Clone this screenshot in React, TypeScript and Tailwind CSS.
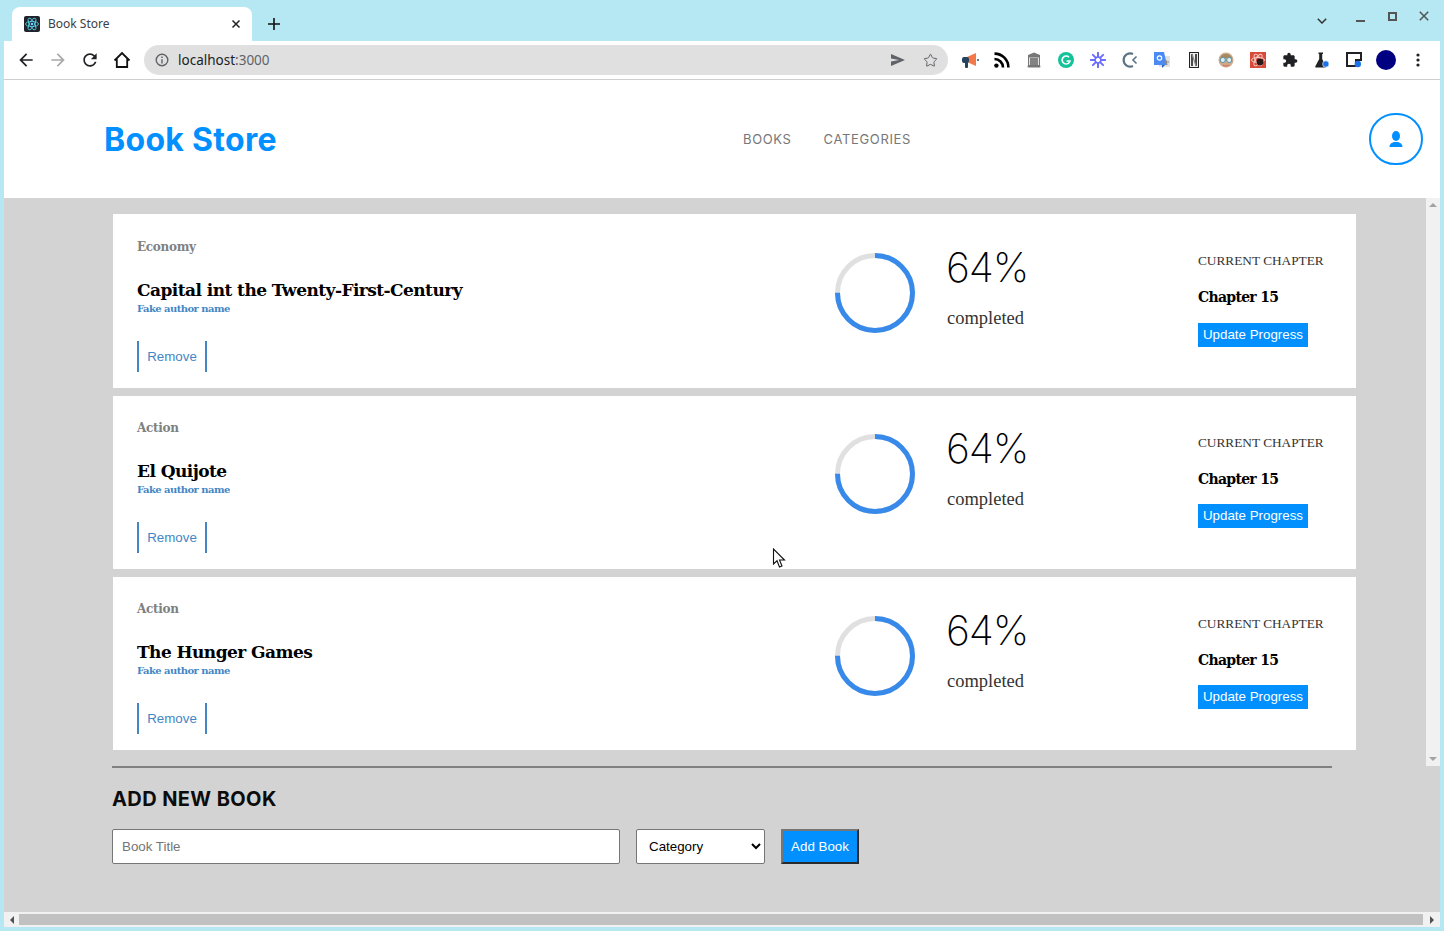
import { Star } from "lucide-react";

const books = [
  { category: "Economy", title: "Capital int the Twenty-First-Century" },
  { category: "Action", title: "El Quijote" },
  { category: "Action", title: "The Hunger Games" },
];

const slab = "font-['DejaVu_Serif','Liberation_Serif',serif]";
const mont = "font-['Inter','Noto_Sans',sans-serif]";
const arial = "font-['Liberation_Sans',Arial,sans-serif]";

function ProgressRing() {
  // 64% is what the reference shows on the label, the ring itself stops at 75%
  const r = 37.5;
  const c = 2 * Math.PI * r;
  return (
    <svg width="80" height="80" viewBox="0 0 80 80" className="shrink-0">
      <circle cx="40" cy="40" r={r} fill="none" stroke="#e0e0e0" strokeWidth="5" />
      <circle
        cx="40"
        cy="40"
        r={r}
        fill="none"
        stroke="#378aea"
        strokeWidth="5"
        strokeDasharray={`${c * 0.75} ${c}`}
        transform="rotate(-90 40 40)"
      />
    </svg>
  );
}

function BookCard({ category, title }: { category: string; title: string }) {
  return (
    <div className="flex h-[173.4px] w-[1243px] shrink-0 bg-white pl-6">
      <div className="w-[698px] shrink-0">
        <div className={`${slab} mt-[24.4px] text-[12px] leading-[16px] font-bold tracking-[-0.3px] text-[#808080]`}>{category}</div>
        <div className={`${slab} mt-[23px] text-[17px] leading-[24px] font-bold tracking-[-0.55px] text-black`}>{title}</div>
        <div className={`${slab} text-[10px] leading-[14px] font-bold tracking-[-0.55px] text-[#4386c5]`}>Fake author name</div>
        <button className={`${arial} mt-[25px] flex h-[31px] w-[70px] items-center justify-center border-x-2 border-[#4386c5] pt-[1px] text-[13.33px] text-[#4386c5]`}>
          Remove
        </button>
      </div>
      <div className="mt-[38.7px]">
        <ProgressRing />
      </div>
      <div className="ml-8 w-[251px] shrink-0">
        <div className={`${mont} mt-[25.7px] -ml-[1px] text-[41px] leading-[54px] font-extralight tracking-[-1.1px] text-black`}>64%</div>
        <div className="mt-[12px] font-['Liberation_Serif',serif] text-[18.5px] leading-[24px] text-[#333]">completed</div>
      </div>
      <div className="flex flex-col items-start">
        <div className="mt-[38.1px] font-['Liberation_Serif',serif] text-[13.3px] leading-[18px] text-[#333]">CURRENT CHAPTER</div>
        <div className={`${slab} mt-[17px] text-[14px] leading-[20px] font-bold tracking-[-0.7px] text-black`}>Chapter 15</div>
        <button className={`${arial} mt-[15.3px] h-[24px] w-[110px] bg-[#0290ff] text-[13.33px] text-white`}>Update Progress</button>
      </div>
    </div>
  );
}

function ExtensionIcons() {
  return (
    <div className="ml-[6px] flex items-center">
      <Slot>
        <svg width="18" height="18" viewBox="0 0 18 18">
          <path d="M6 6 L15 2 V15 L6 11 Z" fill="#f4794a" />
          <rect x="1" y="6" width="7" height="6" rx="2" fill="#23435f" />
          <rect x="4" y="11" width="3" height="6" rx="1" fill="#23435f" />
          <rect x="16" y="8" width="2" height="2" fill="#5c7a90" />
        </svg>
      </Slot>
      <Slot>
        <svg width="16" height="16" viewBox="0 0 16 16" fill="none" stroke="#000" strokeWidth="2.6">
          <circle cx="2.4" cy="13.6" r="2.2" fill="#000" stroke="none" />
          <path d="M0.5 7 A8.5 8.5 0 0 1 9 15.5" />
          <path d="M0.5 1.6 A13.9 13.9 0 0 1 14.4 15.5" />
        </svg>
      </Slot>
      <Slot>
        <svg width="16" height="16" viewBox="0 0 16 16">
          <path d="M8 0.5 L14 3 V5 H2 V3 Z" fill="#777" />
          <rect x="2.5" y="5" width="11" height="8.5" fill="#e4e4e4" stroke="#777" />
          <path d="M5 6v7M7 6v7M9 6v7M11 6v7" stroke="#444" strokeWidth="1.2" />
          <rect x="1.5" y="13.5" width="13" height="2" rx="1" fill="#777" />
        </svg>
      </Slot>
      <Slot>
        <svg width="16" height="16" viewBox="0 0 16 16">
          <circle cx="8" cy="8" r="8" fill="#15c39a" />
          <path d="M11 5.2 A4 4 0 1 0 12 9 H8.6" fill="none" stroke="#fff" strokeWidth="1.6" />
        </svg>
      </Slot>
      <Slot>
        <svg width="16" height="16" viewBox="0 0 16 16" fill="none" stroke="#6d6dff" strokeLinecap="round">
          <path d="M8 0.8V5M8 11V15.2M0.8 8H5M11 8H15.2M2.9 2.9L5.9 5.9M10.1 10.1L13.1 13.1M13.1 2.9L10.1 5.9M5.9 10.1L2.9 13.1" strokeWidth="2" />
          <circle cx="8" cy="8" r="3" strokeWidth="1.4" />
        </svg>
      </Slot>
      <Slot>
        <svg width="16" height="16" viewBox="0 0 16 16" fill="none" stroke="#5b7383" strokeWidth="2.2">
          <path d="M11 2 A6.6 6.6 0 1 0 11 14" />
          <path d="M14.5 4.5 L11 8 L14.5 11.5" strokeWidth="1.6" />
        </svg>
      </Slot>
      <Slot>
        <svg width="16" height="16" viewBox="0 0 16 16">
          <rect x="5" y="4" width="11" height="11" fill="#e2e2e2" />
          <path d="M0 0H10L13 13H0Z" fill="#4a8af4" />
          <circle cx="5.5" cy="6" r="2.2" fill="none" stroke="#fff" strokeWidth="1.2" />
          <path d="M8 16L11 13H8Z" fill="#2a5fb8" />
          <path d="M12 8l1 5M10 10h5" stroke="#888" strokeWidth="1" />
        </svg>
      </Slot>
      <Slot>
        <svg width="10" height="16" viewBox="0 0 10 16">
          <rect x="0.5" y="0.5" width="9" height="15" fill="#eee" stroke="#222" />
          <path d="M3 2V14M7 2V14" stroke="#222" strokeWidth="1.6" />
          <path d="M3 2L7 14" stroke="#888" strokeWidth="1.2" />
        </svg>
      </Slot>
      <Slot>
        <svg width="16" height="16" viewBox="0 0 16 16">
          <circle cx="8" cy="8" r="7.5" fill="#cfa98c" />
          <path d="M2 6A6.5 6.5 0 0 1 14 6Z" fill="#a3895f" />
          <circle cx="4.8" cy="8" r="2.6" fill="#d9eef2" stroke="#5f8ea0" />
          <circle cx="11.2" cy="8" r="2.6" fill="#d9eef2" stroke="#5f8ea0" />
          <path d="M5 13Q8 15 11 13" stroke="#d47a60" strokeWidth="1.5" fill="none" />
        </svg>
      </Slot>
      <Slot>
        <svg width="16" height="16" viewBox="0 0 16 16">
          <rect width="16" height="16" fill="#d94b38" />
          <g fill="none" stroke="#f8d5cf" strokeWidth="0.9">
            <ellipse cx="8" cy="8" rx="6.5" ry="2.6" />
            <ellipse cx="8" cy="8" rx="6.5" ry="2.6" transform="rotate(60 8 8)" />
            <ellipse cx="8" cy="8" rx="6.5" ry="2.6" transform="rotate(120 8 8)" />
          </g>
          <circle cx="10" cy="10" r="3.4" fill="#2b1a18" />
        </svg>
      </Slot>
      <Slot>
        <svg width="16" height="16" viewBox="0 0 24 24" fill="#202124">
          <path d="M20.5 11H19V7c0-1.1-.9-2-2-2h-4V3.5C13 2.12 11.88 1 10.5 1S8 2.12 8 3.5V5H4c-1.1 0-1.99.9-1.99 2v3.8H3.5c1.49 0 2.7 1.21 2.7 2.7s-1.21 2.7-2.7 2.7H2V20c0 1.1.9 2 2 2h3.8v-1.5c0-1.49 1.21-2.7 2.7-2.7 1.49 0 2.7 1.21 2.7 2.7V22H17c1.1 0 2-.9 2-2v-4h1.5c1.38 0 2.5-1.12 2.5-2.5S21.88 11 20.5 11z" />
        </svg>
      </Slot>
      <Slot>
        <svg width="16" height="16" viewBox="0 0 16 16">
          <path d="M4.5 0.5H9V2H8.2V7L12 14.5Q12 15.5 11 15.5H2Q1 15.5 1.2 14.5L5.2 7V2H4.5Z" fill="#202124" />
          <circle cx="11.8" cy="12" r="3.2" fill="#1a73e8" stroke="#fff" strokeWidth="0.6" />
        </svg>
      </Slot>
      <Slot>
        <svg width="16" height="16" viewBox="0 0 16 16">
          <path d="M9 1H15V8H10V14H1V1Z" fill="#fff" stroke="#202124" strokeWidth="2" />
          <circle cx="11.8" cy="12" r="3.2" fill="#1a73e8" />
        </svg>
      </Slot>
      <Slot>
        <div className="size-[20px] rounded-full bg-[#000080]" />
      </Slot>
      <Slot>
        <svg width="4" height="14" viewBox="0 0 4 14" fill="#202124">
          <circle cx="2" cy="2" r="1.6" />
          <circle cx="2" cy="7" r="1.6" />
          <circle cx="2" cy="12" r="1.6" />
        </svg>
      </Slot>
    </div>
  );
}

function Slot({ children }: { children: React.ReactNode }) {
  return <div className="flex h-[30px] w-8 items-center justify-center">{children}</div>;
}

function BrowserChrome() {
  return (
    <>
      {/* tab strip */}
      <div className="flex h-[41px] items-end rounded-t-[5px] bg-[#b6e8f3] pl-3">
        <div className="flex h-[34px] w-[240px] items-center rounded-t-lg bg-white pr-[11px] pl-3 font-['Noto_Sans',sans-serif]">
          <svg width="16" height="16" viewBox="0 0 16 16" className="shrink-0">
            <rect width="16" height="16" rx="2" fill="#20232a" />
            <g fill="none" stroke="#61dafb" strokeWidth="0.8">
              <ellipse cx="8" cy="8" rx="6.5" ry="2.6" />
              <ellipse cx="8" cy="8" rx="6.5" ry="2.6" transform="rotate(60 8 8)" />
              <ellipse cx="8" cy="8" rx="6.5" ry="2.6" transform="rotate(120 8 8)" />
            </g>
            <circle cx="8" cy="8" r="1.3" fill="#61dafb" />
          </svg>
          <span className="ml-2 flex-1 text-[12px] text-[#3c4043]">Book Store</span>
          <svg width="10" height="10" viewBox="0 0 10 10" stroke="#222" strokeWidth="1.5">
            <path d="M1.5 1.5L8.5 8.5M8.5 1.5L1.5 8.5" />
          </svg>
        </div>
        <div className="ml-[16px] flex h-[34px] items-center">
          <svg width="12" height="12" viewBox="0 0 12 12" stroke="#111" strokeWidth="1.6">
            <path d="M6 0V12M0 6H12" />
          </svg>
        </div>
        <div className="ml-auto flex h-[41px] items-center pb-[3px]">
          <svg width="10" height="6" viewBox="0 0 10 6" fill="none" stroke="#333" strokeWidth="1.5" className="mt-[3px]">
            <path d="M0.8 0.8L5 5L9.2 0.8" />
          </svg>
          <div className="ml-[29px] h-[2px] w-[9px] translate-y-[2px] bg-[#555]" />
          <div className="ml-[23px] size-[9px] -translate-y-[3px] border-2 border-[#555]" />
          <svg width="10" height="10" viewBox="0 0 10 10" stroke="#555" strokeWidth="1.6" className="mr-[15px] ml-[22px] -translate-y-[3px]">
            <path d="M0.8 0.8L9.2 9.2M9.2 0.8L0.8 9.2" />
          </svg>
        </div>
      </div>

      {/* toolbar */}
      <div className="mx-[4px] flex h-[39px] items-center border-b border-[#cfcfcf] bg-white pl-[6px]">
        <Slot>
          <svg width="20" height="20" viewBox="0 0 24 24" fill="#202124">
            <path d="M20 11H7.83l5.59-5.59L12 4l-8 8 8 8 1.41-1.41L7.83 13H20v-2z" />
          </svg>
        </Slot>
        <Slot>
          <svg width="20" height="20" viewBox="0 0 24 24" fill="#a8a8a8">
            <path d="M4 11h12.17l-5.59-5.59L12 4l8 8-8 8-1.41-1.41L16.17 13H4v-2z" />
          </svg>
        </Slot>
        <Slot>
          <svg width="20" height="20" viewBox="0 0 24 24" fill="#202124">
            <path d="M17.65 6.35C16.2 4.9 14.21 4 12 4c-4.42 0-7.99 3.58-7.99 8s3.57 8 7.99 8c3.73 0 6.84-2.55 7.73-6h-2.08c-.82 2.33-3.04 4-5.65 4-3.31 0-6-2.69-6-6s2.69-6 6-6c1.66 0 3.14.69 4.22 1.78L13 11h7V4l-2.35 2.35z" />
          </svg>
        </Slot>
        <Slot>
          <svg width="18" height="18" viewBox="0 0 18 18" fill="none" stroke="#111" strokeWidth="1.8" strokeLinejoin="miter">
            <path d="M1.5 9.5L9 2L16.5 9.5M3.8 8V16H14.2V8" />
          </svg>
        </Slot>
        <div className="ml-[6px] flex h-[30px] w-[804px] items-center rounded-full bg-[#e0e0e0] pr-[10px] pl-[11px]">
          <svg width="14" height="14" viewBox="0 0 14 14" fill="none" stroke="#5f6368" strokeWidth="1.4">
            <circle cx="7" cy="7" r="5.8" />
            <path d="M7 6.2V10.4M7 3.6V5" />
          </svg>
          <span className="ml-[9px] flex-1 font-['Noto_Sans',sans-serif] text-[13.5px]">
            <span className="text-[#202124]">localhost</span>
            <span className="text-[#5f6368]">:3000</span>
          </span>
          <svg width="14" height="12" viewBox="0 0 14 12" fill="#5f6368" className="mr-[18px]">
            <path d="M0 0L14 6L0 12L0 7.5L8 6L0 4.5Z" />
          </svg>
          <Star size={15} strokeWidth={1.6} color="#5f6368" />
        </div>
        <ExtensionIcons />
      </div>
    </>
  );
}

export default function App() {
  return (
    <div className="flex h-[931px] w-[1444px] flex-col overflow-hidden bg-[#b6e8f3]">
      <BrowserChrome />

      <div className="mx-[4px] flex h-[847px] flex-col">
        <header className="flex h-[118px] shrink-0 items-center bg-white">
          <h1 className={`${mont} ml-[100px] w-[639px] pt-[1px] text-[32px] font-bold tracking-[0.3px] text-[#0290ff]`}>Book Store</h1>
          <nav className={`${mont} flex gap-8 pt-[1px] text-[13px] tracking-[0.65px] text-[#777]`}>
            <span>BOOKS</span>
            <span>CATEGORIES</span>
          </nav>
          <button className="mr-[17px] ml-auto flex h-[52px] w-[54px] items-center justify-center rounded-full border-2 border-[#0290ff]">
            <svg width="16" height="17" viewBox="0 0 16 17" fill="#0290ff">
              <ellipse cx="8" cy="5" rx="4" ry="5" />
              <path d="M1.5 16C1.5 12.5 4 12 6 11H10C12 12 14.5 12.5 14.5 16Z" />
            </svg>
          </button>
        </header>

        <div className="relative flex min-h-0 flex-1 flex-col bg-[#d3d3d3]">
          <div className="flex h-[568px] shrink-0">
            <div className="flex flex-1 flex-col gap-2 pt-[16.2px] pl-[109px]">
              {books.map((book) => (
                <BookCard key={book.title} category={book.category} title={book.title} />
              ))}
            </div>
            {/* page scrollbar */}
            <div className="flex w-[14px] flex-col items-center justify-between bg-[#f1f1f1] py-[5px]">
              <div className="size-0 border-x-[4px] border-b-[4px] border-x-transparent border-b-[#a3a3a3]" />
              <div className="size-0 border-x-[4px] border-t-[4px] border-x-transparent border-t-[#a3a3a3]" />
            </div>
          </div>

          <div className="flex-1 pl-[108px]">
            <div className="h-[2px] w-[1220px] bg-[#808080]" />
            <h2 className={`${mont} mt-[18px] text-[20px] leading-[26px] font-bold tracking-[0.4px] text-[#0c0c0c]`}>ADD NEW BOOK</h2>
            <form className={`${arial} mt-[17px] flex gap-4 text-[13.33px]`}>
              <input
                type="text"
                placeholder="Book Title"
                className="h-[35px] w-[508px] rounded-[2px] border border-[#767676] bg-white px-[9px] text-[13.33px] outline-none placeholder:text-[#757575]"
              />
              <select className="h-[35px] w-[129px] rounded-[2px] border border-[#767676] bg-white px-[8px] text-[13.33px] text-black">
                <option>Category</option>
              </select>
              <button
                type="button"
                className="h-[35px] w-[78px] border-2 border-t-[#767676] border-r-[#2b2b2b] border-b-[#2b2b2b] border-l-[#767676] bg-[#0290ff] text-[13.33px] text-white"
              >
                Add Book
              </button>
            </form>
          </div>

          {/* bottom scrollbar */}
          <div className="flex h-[15px] shrink-0 items-center border-y-2 border-[#f1f1f1] bg-[#f1f1f1]">
            <div className="flex w-[15px] justify-center">
              <div className="size-0 border-y-[4px] border-r-[4px] border-y-transparent border-r-[#505050]" />
            </div>
            <div className="h-[11px] w-[1404px] bg-[#c1c1c1]" />
            <div className="flex w-[17px] justify-center">
              <div className="size-0 border-y-[4px] border-l-[4px] border-y-transparent border-l-[#505050]" />
            </div>
          </div>
        </div>
      </div>

      {/* mouse pointer captured in the screenshot */}
      <svg width="14" height="21" viewBox="0 0 14 21" className="absolute top-[548px] left-[772px]">
        <path d="M1.5 1V16L5 12.8L7.5 19L10 18L7.5 12H12.5Z" fill="#fff" stroke="#111" strokeWidth="1.1" />
      </svg>
    </div>
  );
}
